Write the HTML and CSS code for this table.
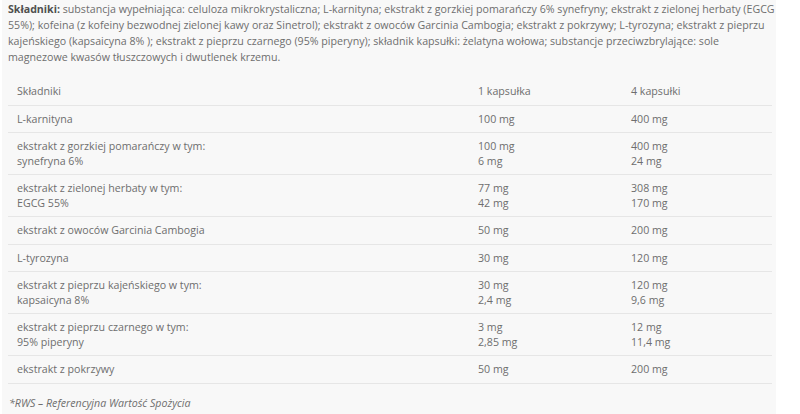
FILE: index.html
```html
<!DOCTYPE html>
<html lang="pl">
<head>
<meta charset="utf-8">
<link rel="stylesheet" href="styles.css">
</head>
<body>
<div class="panel">
  <p class="intro"><strong>Składniki:</strong> substancja wypełniająca: celuloza mikrokrystaliczna; L-karnityna; ekstrakt z gorzkiej pomarańczy 6% synefryny; ekstrakt z zielonej herbaty (EGCG<br>55%); kofeina (z kofeiny bezwodnej zielonej kawy oraz Sinetrol); ekstrakt z owoców Garcinia Cambogia; ekstrakt z pokrzywy; L-tyrozyna; ekstrakt z pieprzu<br>kajeńskiego (kapsaicyna 8% ); ekstrakt z pieprzu czarnego (95% piperyny); składnik kapsułki: żelatyna wołowa; substancje przeciwzbrylające: sole<br>magnezowe kwasów tłuszczowych i dwutlenek krzemu.</p>
  <table class="tbl">
    <colgroup><col class="c1"><col class="c2"><col class="c3"></colgroup>
    <tr><td>Składniki</td><td>1 kapsułka</td><td>4 kapsułki</td></tr>
    <tr><td>L-karnityna</td><td>100 mg</td><td>400 mg</td></tr>
    <tr><td>ekstrakt z gorzkiej pomarańczy w tym:<br>synefryna 6%</td><td>100 mg<br>6 mg</td><td>400 mg<br>24 mg</td></tr>
    <tr><td>ekstrakt z zielonej herbaty w tym:<br>EGCG 55%</td><td>77 mg<br>42 mg</td><td>308 mg<br>170 mg</td></tr>
    <tr><td>ekstrakt z owoców Garcinia Cambogia</td><td>50 mg</td><td>200 mg</td></tr>
    <tr><td>L-tyrozyna</td><td>30 mg</td><td>120 mg</td></tr>
    <tr><td>ekstrakt z pieprzu kajeńskiego w tym:<br>kapsaicyna 8%</td><td>30 mg<br>2,4 mg</td><td>120 mg<br>9,6 mg</td></tr>
    <tr><td>ekstrakt z pieprzu czarnego w tym:<br>95% piperyny</td><td>3 mg<br>2,85 mg</td><td>12 mg<br>11,4 mg</td></tr>
    <tr><td>ekstrakt z pokrzywy</td><td>50 mg</td><td>200 mg</td></tr>
  </table>
  <p class="note">*RWS – Referencyjna Wartość Spożycia</p>
</div>
</body>
</html>
```
FILE: styles.css
```css
html, body {
  margin: 0;
  padding: 0;
  background: #ffffff;
}
body {
  font-family: "Open Sans", "Liberation Sans", sans-serif;
  color: #6e6e6e;
  font-size: 10.65px;
}
.panel {
  width: 774px;
  height: 414px;
  margin-left: 2px;
  background: #f8f8f8;
  padding: 1px 0 0 6px;
  box-sizing: border-box;
  overflow: hidden;
}
.intro {
  margin: 0;
  line-height: 16px;
  white-space: nowrap;
}
.intro strong {
  font-weight: 700;
  color: #4f4f4f;
}
.tbl {
  width: 764px;
  border-collapse: collapse;
  margin-top: 13px;
}
.c1 { width: 461px; }
.c2 { width: 153px; }
.c3 { width: 150px; }
.tbl td {
  padding: 6px 9px;
  line-height: 14.5px;
  vertical-align: top;
  border-bottom: 1px solid #e6e6e6;
}
.note {
  margin: 12px 0 0 1px;
  font-style: italic;
  line-height: 15px;
}
```
